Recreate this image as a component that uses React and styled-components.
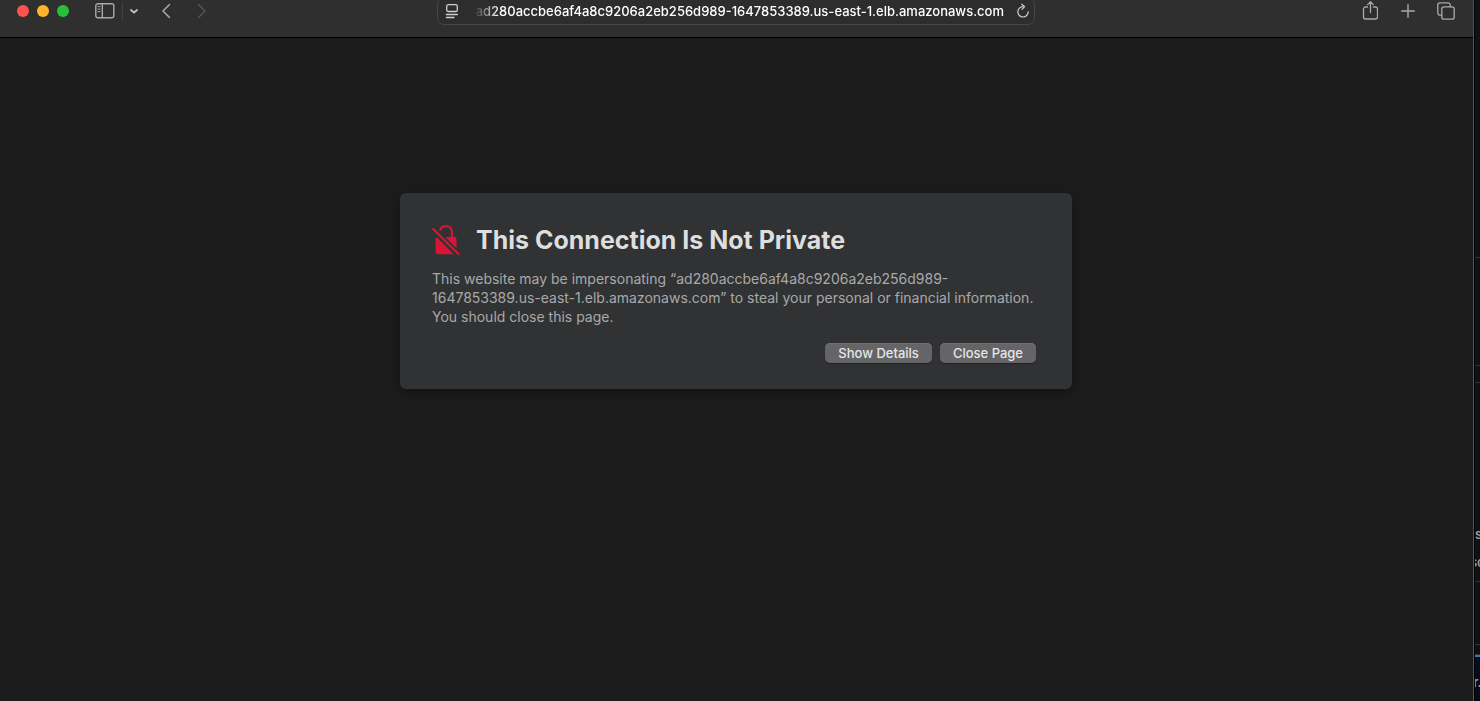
import React from "react";
import styled, { createGlobalStyle } from "styled-components";

const GlobalStyle = createGlobalStyle`
  *, *::before, *::after { box-sizing: border-box; }
  body {
    margin: 0;
    background: #1c1c1c;
    font-family: Inter, "Liberation Sans", sans-serif;
    -webkit-font-smoothing: antialiased;
  }
  button, input { font: inherit; }
`;

const Desktop = styled.div`
  display: flex;
  min-height: 100vh;
  overflow: hidden;
`;

const BrowserWindow = styled.div`
  flex: 1;
  min-width: 0;
  display: flex;
  flex-direction: column;
  background: #1c1c1c;
  border-right: 1px solid #535353;
`;

const Toolbar = styled.header`
  display: grid;
  grid-template-columns: 1fr minmax(0, 598px) 1fr;
  grid-template-rows: 22px;
  align-items: center;
  height: 38px;
  padding-right: 1px;
  background: #2f2f2f;
  border-bottom: 1px solid #000;
`;

const ToolGroup = styled.div`
  display: flex;
  align-items: center;
  justify-content: ${(p) => (p.$end ? "flex-end" : "flex-start")};
  gap: ${(p) => p.$gap || 0}px;
  padding: 0 15px 0 16px;
`;

const TrafficLights = styled.div`
  display: flex;
  gap: 8px;
  padding: 0 25px 0 1px;
`;

const Light = styled.button`
  width: 12px;
  height: 12px;
  padding: 0;
  border: 0;
  border-radius: 50%;
  background: ${(p) => p.$color};
`;

const IconButton = styled.button`
  display: flex;
  align-items: center;
  justify-content: center;
  width: 22px;
  height: 22px;
  flex: none;
  padding: 0;
  border: 0;
  background: none;
  color: ${(p) => p.$color || "#a9a9a9"};
`;

const Divider = styled.span`
  width: 1px;
  height: 18px;
  margin-left: 6px;
  background: #414141;
`;

const Navigation = styled.nav`
  display: flex;
  gap: 14px;
  margin-left: 10px;
`;

const AddressField = styled.div`
  display: flex;
  align-items: center;
  height: 28px;
  padding: 0 0 0 3px;
  border: 1px solid #464646;
  border-radius: 7px;
  background: #2d2d2d;
`;

const Address = styled.div`
  flex: 1;
  min-width: 0;
  display: flex;
  justify-content: flex-end;
  overflow: hidden;
  margin: 0 8px 0 6px;
  color: #fff;
  font-size: 13px;
  font-weight: 500;
  line-height: 18px;
  white-space: nowrap;
`;

const AddressText = styled.span`
  mask-image: linear-gradient(to right, rgba(0, 0, 0, 0.1), #000 24px);
`;

const Page = styled.main`
  flex: 1;
  display: flex;
  justify-content: center;
  align-items: flex-start;
  padding: 155px 25px 32px 24px;
`;

const Card = styled.section`
  width: 100%;
  max-width: 672px;
  padding: 30px 36px 26px 32px;
  border-radius: 6px;
  background: #313233;
  box-shadow: 0 4px 14px rgba(0, 0, 0, 0.35);
`;

const CardHeader = styled.div`
  display: flex;
  align-items: center;
  gap: 16px;
  margin-bottom: 12px;
`;

const Title = styled.h1`
  margin: 0;
  color: #dededf;
  font-size: 25px;
  font-weight: 700;
  line-height: 34px;
`;

const Message = styled.p`
  margin: 0;
  color: #a9a9aa;
  font-size: 14px;
  line-height: 19px;
`;

const Actions = styled.div`
  display: flex;
  justify-content: flex-end;
  gap: 8px;
  margin-top: 17px;
`;

const PushButton = styled.button`
  height: 20px;
  padding: 0 13px;
  border: 0;
  border-radius: 5px;
  background: #656567;
  box-shadow: inset 0 1px 0 #707072, 0 1px 1px rgba(0, 0, 0, 0.35);
  color: #e6e6e6;
  font-size: 13px;
  font-weight: 500;
  line-height: 20px;
  white-space: nowrap;
`;

const BackgroundWindow = styled.aside`
  display: flex;
  flex-direction: column;
  width: 6px;
  height: 100vh;
  overflow: hidden;
  border-left: 1px solid #000;
  background: #0d1217;
  color: #96999c;
  font-size: 13px;
  font-weight: 600;
  line-height: 28px;
`;

const Pane = styled.div`
  flex: ${(p) => (p.$height ? "none" : "1")};
  height: ${(p) => (p.$height ? p.$height + "px" : "auto")};
  padding-top: ${(p) => p.$top || 0}px;
  border-bottom: 1px solid #2c3136;
`;

const ActivePane = styled.div`
  height: 46px;
  padding-top: 11px;
  border-top: 2px solid #2f7dbd;
  background: #030c1b;
`;

const Line = styled.div`
  display: flex;
  justify-content: ${(p) => (p.$center ? "center" : "flex-start")};
  white-space: nowrap;
`;

const Icon = ({ w, h, sw = 1.4, children }) => (
  <svg
    width={w}
    height={h}
    viewBox={`0 0 ${w} ${h}`}
    fill="none"
    stroke="currentColor"
    strokeWidth={sw}
    strokeLinecap="round"
    strokeLinejoin="round"
    aria-hidden="true"
  >
    {children}
  </svg>
);

const SidebarIcon = () => (
  <Icon w={20} h={16}>
    <rect x="0.8" y="0.8" width="18" height="14" rx="2" />
    <path d="M7.3 1v13.6" />
    <path d="M3 3.6h2M3 6.1h2M3 8.6h2" strokeWidth="1" />
  </Icon>
);

const PageMenuIcon = () => (
  <Icon w={14} h={16} sw={1.3}>
    <rect x="1.7" y="1.7" width="10.6" height="6.8" rx="1.6" />
    <path d="M1.4 11.5h11M1.4 14.5h7.6" />
  </Icon>
);

const ReloadIcon = () => (
  <Icon w={14} h={16} sw={1.2}>
    <path d="M7 3.6a5.2 5.2 0 1 0 5.2 5.2" />
    <path d="M5.8 1.2l2.8 2.5-2.6 2.6" />
  </Icon>
);

const ShareIcon = () => (
  <Icon w={16} h={20} sw={1.3}>
    <path d="M5.5 6H3.5A2 2 0 0 0 1.500 8v8a2 2 0 0 0 2 2h10a2 2 0 0 0 2-2V8a2 2 0 0 0-2-2h-2" />
    <path d="M8.500 11.500V.900M5.700 3.600L8.500 .8l2.800 2.800" />
  </Icon>
);

const TabsIcon = () => (
  <Icon w={18} h={18} sw={1.3}>
    <rect x="4.8" y="4.8" width="12.4" height="12.4" rx="2.2" />
    <path d="M4.8 13.2H3A2.2 2.2 0 0 1 .8 11V3A2.2 2.2 0 0 1 3 .8h8A2.2 2.2 0 0 1 13.2 3v1.8" />
  </Icon>
);

const LockSlashIcon = () => (
  <svg width="28" height="32" viewBox="0 0 28 32" fill="none" aria-hidden="true">
    <path
      d="M8.200 6.600C8.800 4 11 2.100 14 2.100c3.600 0 6 2.500 6 6.200v5"
      stroke="#d71535"
      strokeWidth="2.2"
    />
    <rect x="3.5" y="13" width="21" height="17.2" rx="2.4" fill="#d71535" />
    <path d="M-1 3.200L29 33" stroke="#313233" strokeWidth="6" />
    <path d="M1.200 5L26.500 30" stroke="#d71535" strokeWidth="2.2" strokeLinecap="round" />
  </svg>
);

export default function App() {
  return (
    <>
      <GlobalStyle />
      <Desktop>
        <BrowserWindow>
          <Toolbar>
            <ToolGroup>
              <TrafficLights>
                <Light $color="#ff534f" aria-label="Close window" />
                <Light $color="#ffb429" aria-label="Minimize window" />
                <Light $color="#27c138" aria-label="Zoom window" />
              </TrafficLights>
              <IconButton aria-label="Show sidebar">
                <SidebarIcon />
              </IconButton>
              <Divider />
              <IconButton aria-label="Tab groups" $color="#c4c4c4">
                <Icon w={8} h={5} sw={1.8}>
                  <path d="M1 1l3 2.600 3-2.600" />
                </Icon>
              </IconButton>
              <Navigation aria-label="History">
                <IconButton aria-label="Back">
                  <Icon w={10} h={16} sw={1.5}>
                    <path d="M8.500 1.500L2 8l6.500 6.500" />
                  </Icon>
                </IconButton>
                <IconButton aria-label="Forward" $color="#535353">
                  <Icon w={10} h={16} sw={1.5}>
                    <path d="M1.500 1.500L8 8l-6.500 6.500" />
                  </Icon>
                </IconButton>
              </Navigation>
            </ToolGroup>
            <AddressField>
              <IconButton aria-label="Page menu" $color="#cfcfcf">
                <PageMenuIcon />
              </IconButton>
              <Address>
                <AddressText>
                  ad280accbe6af4a8c9206a2eb256d989-1647853389.us-east-1.elb.amazonaws.com
                </AddressText>
              </Address>
              <IconButton aria-label="Reload page" $color="#cfcfcf">
                <ReloadIcon />
              </IconButton>
            </AddressField>
            <ToolGroup $end $gap={16}>
              <IconButton aria-label="Share">
                <ShareIcon />
              </IconButton>
              <IconButton aria-label="New tab">
                <Icon w={14} h={14}>
                  <path d="M7 .7v12.600M.7 7h12.600" />
                </Icon>
              </IconButton>
              <IconButton aria-label="Tab overview">
                <TabsIcon />
              </IconButton>
            </ToolGroup>
          </Toolbar>
          <Page>
            <Card aria-labelledby="warning-title">
              <CardHeader>
                <LockSlashIcon />
                <Title id="warning-title">This Connection Is Not Private</Title>
              </CardHeader>
              <Message>
                This website may be impersonating “ad280accbe6af4a8c9206a2eb256d989-
                1647853389.us-east-1.elb.amazonaws.com” to steal your personal or financial
                information. You should close this page.
              </Message>
              <Actions>
                <PushButton>Show Details</PushButton>
                <PushButton>Close Page</PushButton>
              </Actions>
            </Card>
          </Page>
        </BrowserWindow>
        <BackgroundWindow>
          <Pane $height={258} />
          <Pane $height={108} />
          <Pane $height={17} />
          <Pane $height={199} $top={137}>
            <Line>s</Line>
            <Line $center>so</Line>
          </Pane>
          <Pane $height={63} />
          <Pane />
          <ActivePane>
            <Line $center>r.</Line>
          </ActivePane>
        </BackgroundWindow>
      </Desktop>
    </>
  );
}
